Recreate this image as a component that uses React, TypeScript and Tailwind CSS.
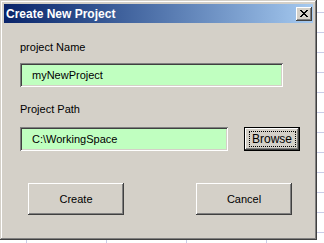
import React from 'react';

const raised =
  'shadow-[inset_-1px_-1px_#404040,inset_1px_1px_#ffffff,inset_-2px_-2px_#808080,inset_2px_2px_#d4d0c8]';
const sunken =
  'shadow-[inset_1px_1px_#808080,inset_-1px_-1px_#ffffff,inset_2px_2px_#404040,inset_-2px_-2px_#d4d0c8]';

function TextBox({ value, width }: { value: string; width: string }) {
  return (
    <div className={`${width} h-[24px] bg-[#c0ffc0] ${sunken} flex items-center pl-[12px] text-[11px] text-black`}>
      {value}
    </div>
  );
}

function Button({ label }: { label: string }) {
  return (
    <button className={`w-[96px] h-[32px] bg-[#d4d0c8] ${raised} flex items-center justify-center text-[11px] text-black`}>
      {label}
    </button>
  );
}

export default function App() {
  return (
    <div className="relative w-[324px] h-[243px] bg-white overflow-hidden font-['Liberation_Sans',Arial,sans-serif]">
      {/* spreadsheet grid behind the dialog */}
      <div className="absolute inset-0">
        {[12, 32, 52, 72, 92, 112, 132, 152, 172, 192, 212, 232].map(y => (
          <div key={y} className="absolute left-0 right-0 h-px bg-[#c8cce8]" style={{ top: y }} />
        ))}
        {[26, 106, 186, 266].map(x => (
          <div key={x} className="absolute top-0 bottom-0 w-px bg-[#c8cce8]" style={{ left: x }} />
        ))}
      </div>

      <div className="relative w-[317px] h-[240px] bg-[#d4d0c8] p-[3px] shadow-[inset_-1px_-1px_#404040,inset_1px_1px_#d4d0c8,inset_-2px_-2px_#808080,inset_2px_2px_#ffffff]">
        {/* title bar */}
        <div className="h-[19px] mt-px ml-px mr-px flex items-center justify-between bg-gradient-to-r from-[#0a246a] to-[#a6caf0] pl-[2px] pr-[1px]">
          <span className="text-white font-bold text-[12px] leading-none">Create New Project</span>
          <div className={`w-[16px] h-[14px] bg-[#d4d0c8] ${raised} flex items-center justify-center`}>
            <svg width="8" height="7" viewBox="0 0 8 7" shapeRendering="crispEdges">
              <path d="M0 0h2v1h1v1h2V1h1V0h2v1H7v1H6v1H5v1h1v1h1v1h1v1H6V6H5V5H3v1H2v1H0V6h1V5h1V4h1V3H2V2H1V1H0z" fill="#000" />
            </svg>
          </div>
        </div>

        {/* body */}
        <div className="pl-[17px] pt-[18px]">
          <div className="h-[13px] text-[11px] leading-[13px] text-black">project Name</div>
          <div className="mt-[9px]">
            <TextBox value="myNewProject" width="w-[263px]" />
          </div>

          <div className="mt-[16px] h-[13px] text-[11px] leading-[13px] text-black">Project Path</div>
          <div className="mt-[11px] flex items-center gap-[16px]">
            <TextBox value="C:\WorkingSpace" width="w-[208px]" />
            <button className="w-[56px] h-[24px] bg-[#d4d0c8] border border-black shadow-[inset_-1px_-1px_#404040,inset_1px_1px_#ffffff,inset_-2px_-2px_#808080] flex items-center justify-center">
              <span className="w-[47px] h-[16px] flex items-center justify-center border border-dotted border-black text-[12px] text-black">
                Browse
              </span>
            </button>
          </div>

          <div className="mt-[32px] pl-[8px] flex gap-[72px]">
            <Button label="Create" />
            <Button label="Cancel" />
          </div>
        </div>
      </div>
    </div>
  );
}
